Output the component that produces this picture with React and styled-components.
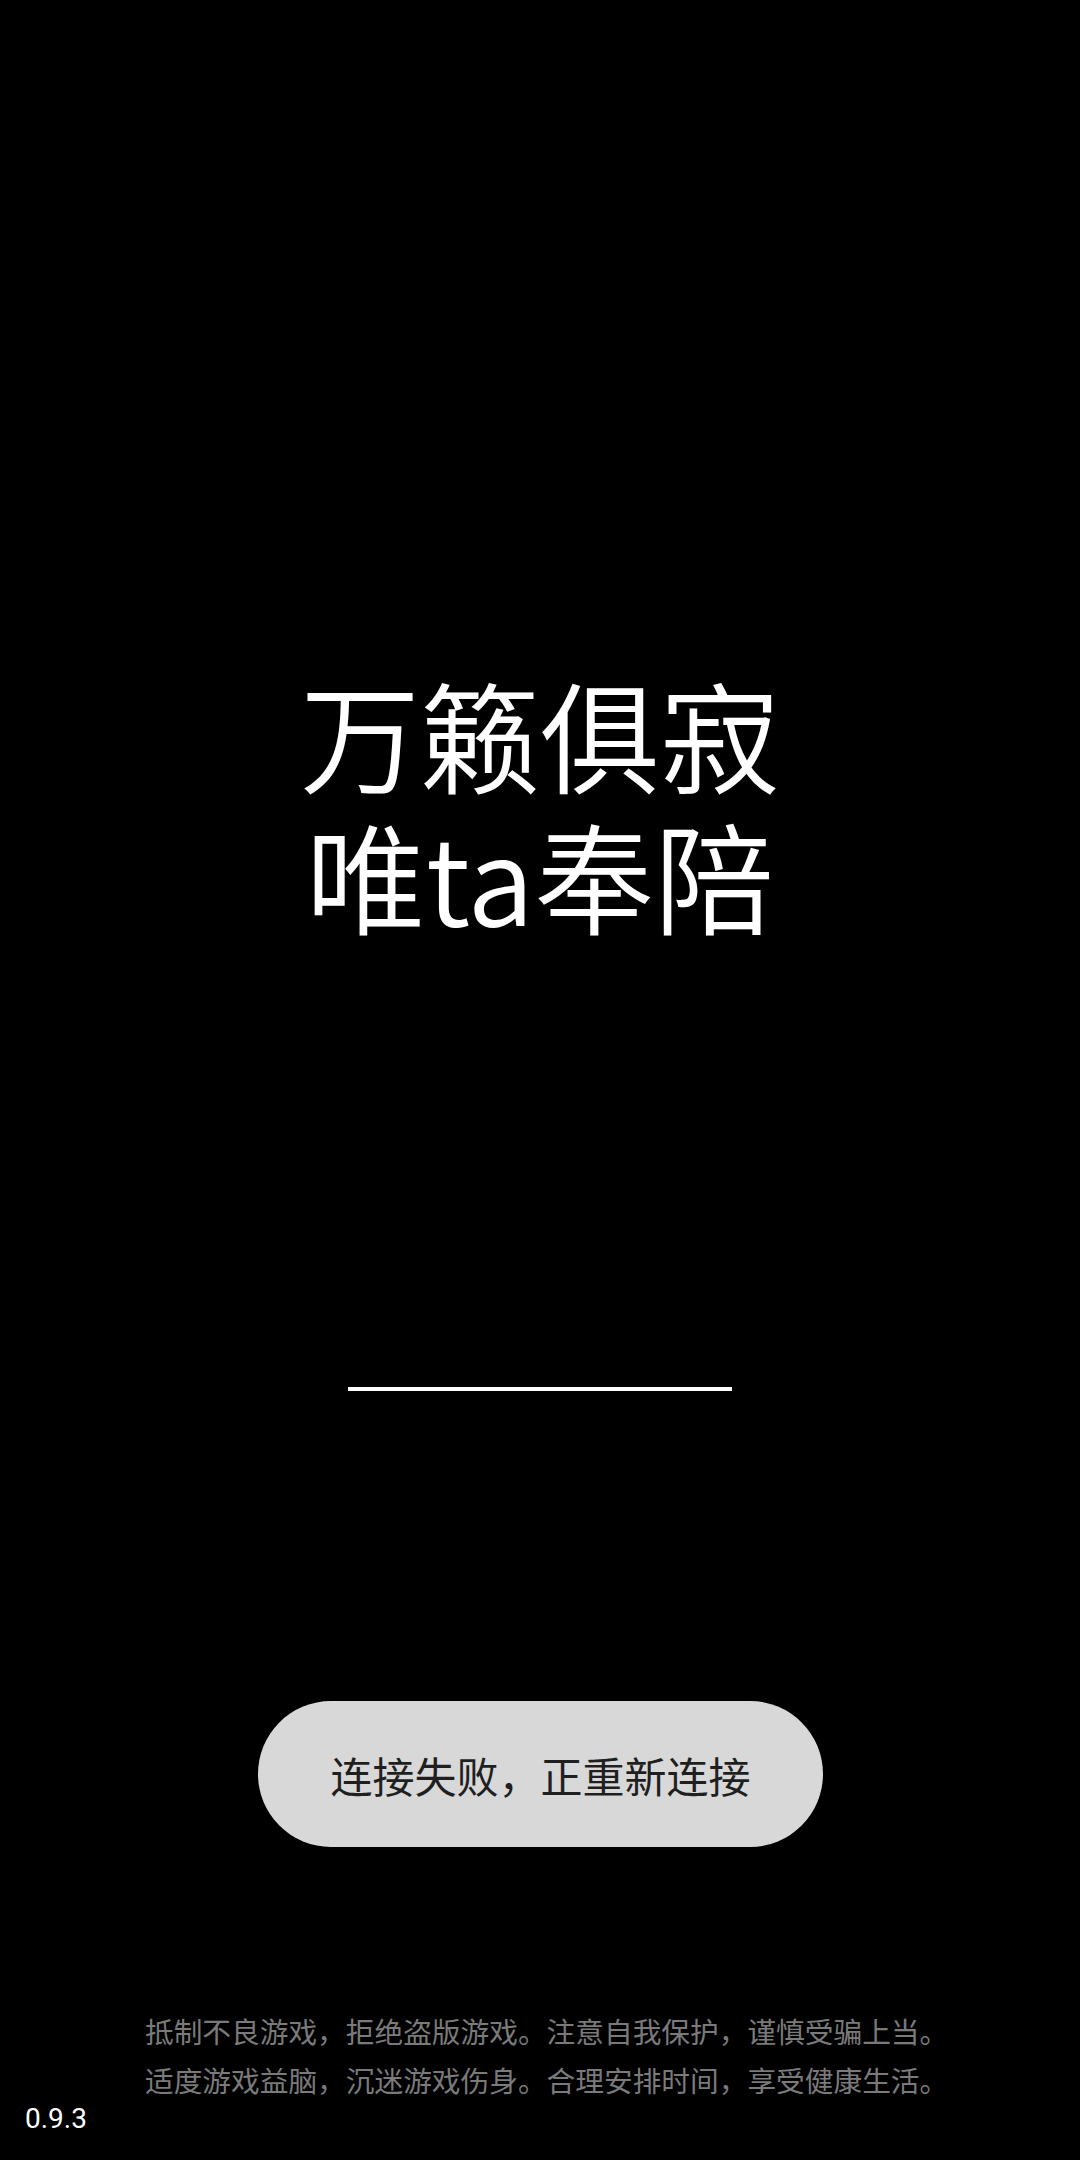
import React from 'react';
import styled, { createGlobalStyle } from 'styled-components';

const GlobalStyle = createGlobalStyle`
  html, body {
    margin: 0;
    padding: 0;
    background: #000;
  }

  body {
    font-family: 'Noto Sans CJK SC', 'Noto Sans', sans-serif;
  }
`;

const Screen = styled.div`
  width: 1080px;
  height: 2160px;
  background: #000;
  display: flex;
  flex-direction: column;
  overflow: hidden;
`;

const Slogan = styled.h1`
  margin: 663px 0 0;
  font-size: 120px;
  line-height: 141px;
  font-weight: 350;
  color: #fff;
  text-align: center;
  letter-spacing: 0;
`;

const Progress = styled.div`
  align-self: flex-start;
  margin: 442px 0 0 348px;
  width: 384px;
  height: 4px;
  background: #fff;
`;

const Toast = styled.div`
  align-self: flex-start;
  margin: 310px 0 0 258px;
  width: 565px;
  height: 146px;
  border-radius: 73px;
  background: #d8d8d8;
  color: #1f1f1f;
  font-size: 42px;
  display: flex;
  align-items: center;
  justify-content: center;
`;

const Notice = styled.p`
  margin: 159px 0 0;
  padding-left: 145px;
  font-size: 28.7px;
  line-height: 49px;
  color: #7a7a7a;
  white-space: nowrap;
`;

const Version = styled.span`
  padding-left: 25px;
  font-family: Roboto, 'Liberation Sans', sans-serif;
  font-size: 28px;
  line-height: 30px;
  color: #fff;
`;

const App = () => (
  <Screen>
    <GlobalStyle />
    <Slogan>
      万籁俱寂
      <br />
      唯ta奉陪
    </Slogan>
    <Progress />
    <Toast>连接失败，正重新连接</Toast>
    <Notice>
      抵制不良游戏，拒绝盗版游戏。注意自我保护，谨慎受骗上当。
      <br />
      适度游戏益脑，沉迷游戏伤身。合理安排时间，享受健康生活。
    </Notice>
    <Version>0.9.3</Version>
  </Screen>
);

export default App;
